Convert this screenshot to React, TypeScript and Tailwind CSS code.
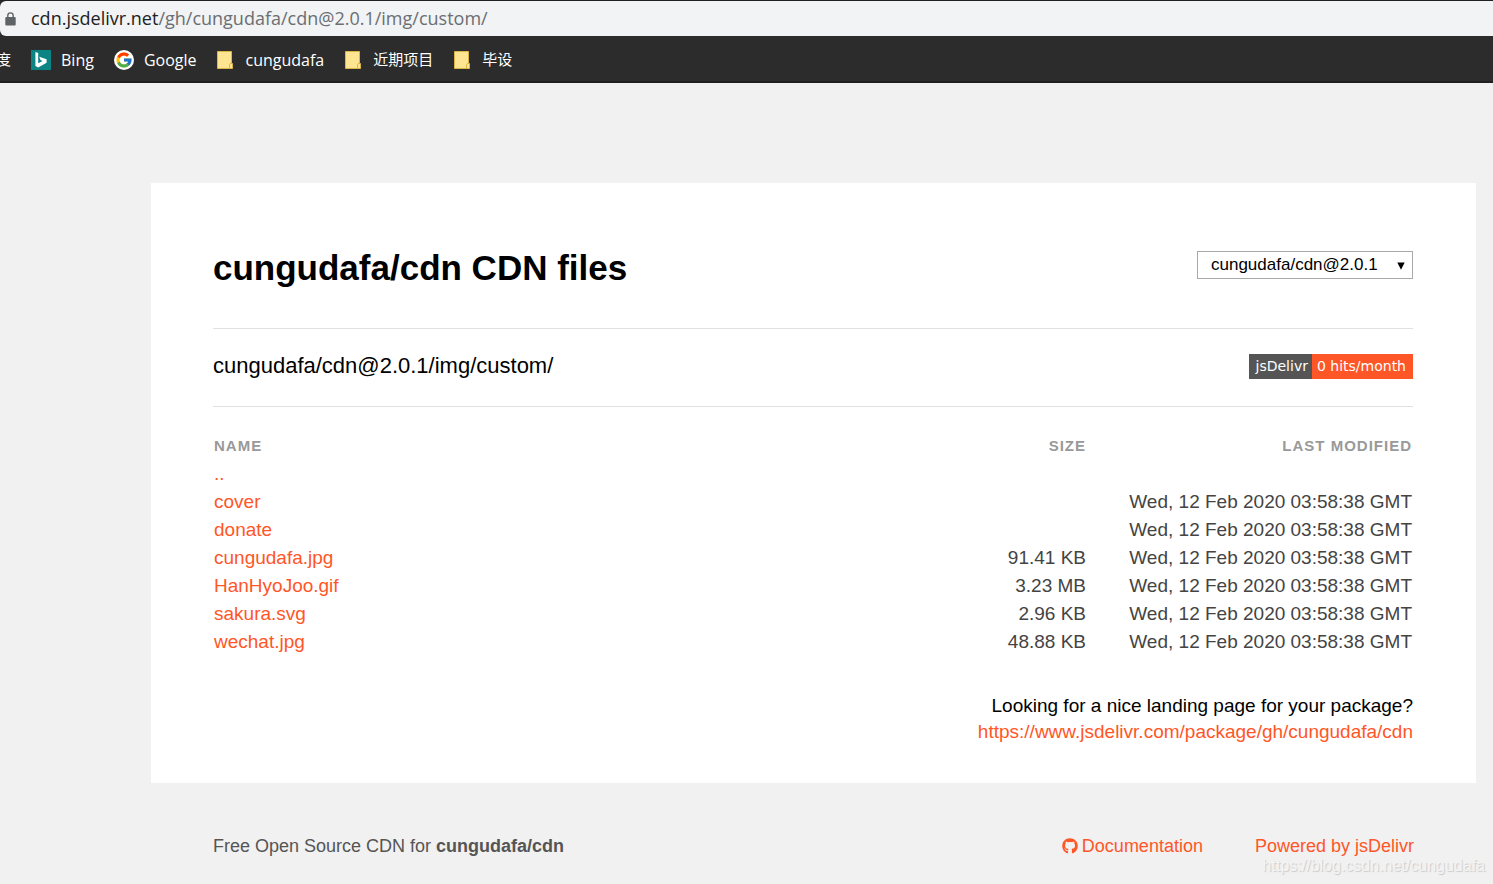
import { FaGithub } from "react-icons/fa";
import { FcGoogle } from "react-icons/fc";

const files = [
  { name: "..", size: "", modified: "" },
  { name: "cover", size: "", modified: "Wed, 12 Feb 2020 03:58:38 GMT" },
  { name: "donate", size: "", modified: "Wed, 12 Feb 2020 03:58:38 GMT" },
  { name: "cungudafa.jpg", size: "91.41 KB", modified: "Wed, 12 Feb 2020 03:58:38 GMT" },
  { name: "HanHyoJoo.gif", size: "3.23 MB", modified: "Wed, 12 Feb 2020 03:58:38 GMT" },
  { name: "sakura.svg", size: "2.96 KB", modified: "Wed, 12 Feb 2020 03:58:38 GMT" },
  { name: "wechat.jpg", size: "48.88 KB", modified: "Wed, 12 Feb 2020 03:58:38 GMT" },
];

function LockIcon() {
  return (
    <svg viewBox="0 0 11 14" className="h-3.5 w-[11px] shrink-0" aria-hidden="true">
      <path d="M2.8 6V3.6a2.7 2.7 0 0 1 5.4 0V6" fill="none" stroke="#5f6368" strokeWidth="1.4" />
      <rect x="0.3" y="5" width="10.4" height="8.5" rx="1" fill="#5f6368" />
    </svg>
  );
}

function BingIcon() {
  return (
    <svg viewBox="0 0 20 20" className="size-5 shrink-0" aria-hidden="true">
      <rect width="20" height="20" fill="#0c8484" />
      <path d="M4.4 2 7.2 3V13.2L11.6 10.9 9.5 9.9 8.2 6.8 15.6 9.3V12.7L7.2 17.6 4.4 16Z" fill="#fff" />
    </svg>
  );
}

function GoogleIcon() {
  return (
    <span className="flex size-5 shrink-0 items-center justify-center rounded-full bg-white">
      <FcGoogle className="size-[18px]" aria-hidden="true" />
    </span>
  );
}

function FolderIcon() {
  return (
    <svg viewBox="0 0 16 18" className="h-[18px] w-4 shrink-0" aria-hidden="true">
      <path d="M0.5 0.5H14.5V12.5H15.5V17.5H0.5Z" fill="#ffe591" stroke="#dcb546" />
      <path d="M12.5 17V13.5Q12.5 12.5 14.5 12.5" fill="none" stroke="#dcb546" />
    </svg>
  );
}

function BrowserBar() {
  return (
    <header className="font-['Open_Sans','Noto_Sans_CJK_SC',sans-serif]">
      <div className="border-t border-[#202124] bg-[#2c2c2c]">
        <div className="flex h-[35px] items-center gap-[15px] rounded-l-md bg-[#f1f3f4] pl-[5px] text-lg">
          <LockIcon />
          <div className="pb-0.5 text-[#6b6e72]">
            <span className="text-[#202124]">cdn.jsdelivr.net</span>/gh/cungudafa/cdn@2.0.1/img/custom/
          </div>
        </div>
      </div>
      <nav className="flex h-[47px] items-center overflow-hidden border-b-2 border-[#1f1f1f] bg-[#2c2c2c] pt-0.5 text-base whitespace-nowrap text-white">
        <a href="#baidu" className="flex w-[11px] shrink-0 justify-end text-[15px]">度</a>
        <a href="#bing" className="ml-5 flex items-center gap-2.5"><BingIcon />Bing</a>
        <a href="#google" className="ml-5 flex items-center gap-2.5"><GoogleIcon />Google</a>
        <a href="#cungudafa" className="ml-[21px] flex items-center gap-3"><FolderIcon />cungudafa</a>
        <a href="#recent" className="ml-[21px] flex items-center gap-3 text-[15px]"><FolderIcon />近期项目</a>
        <a href="#graduation" className="ml-[21px] flex items-center gap-3 text-[15px]"><FolderIcon />毕设</a>
      </nav>
    </header>
  );
}

export default function App() {
  return (
    <div className="relative min-h-screen bg-[#f1f1f1] font-['Liberation_Sans',Arial,sans-serif] text-lg text-black">
      <BrowserBar />
      <div className="pt-[100px] pr-[17px] pl-[151px]">
        <main className="bg-white pt-[60px] pr-[63px] pb-[38px] pl-[62px]">
          <div className="flex h-[86px] items-start justify-between border-b border-[#e1e1e1]">
            <h1 className="pt-1 text-[35px] leading-[42px] font-bold">cungudafa/cdn CDN files</h1>
            <div className="relative mt-2">
              <select aria-label="Version" className="block h-7 w-[216px] appearance-none border border-[#a9a9a9] bg-white pl-[13px] text-[17px] leading-6">
                <option>cungudafa/cdn@2.0.1</option>
              </select>
              <svg viewBox="0 0 8 8" className="pointer-events-none absolute top-[11px] right-2 size-2" aria-hidden="true">
                <path d="M0.3 0.5H7.7L4 7.8Z" fill="#000" />
              </svg>
            </div>
          </div>
          <div className="flex h-[78px] items-center justify-between border-b border-[#e1e1e1] pb-0.5">
            <h2 className="pb-0.5 text-[22px] leading-7">cungudafa/cdn@2.0.1/img/custom/</h2>
            <a href="#stats" className="flex h-[25px] items-center font-['DejaVu_Sans',sans-serif] text-sm leading-[25px] text-white">
              <span className="h-full bg-[#555] pr-1 pl-[7px] leading-[25px]">jsDelivr</span>
              <span className="h-full bg-[#ff5627] pr-[7px] pl-[5px] leading-[25px]">0 hits/month</span>
            </a>
          </div>
          <table className="mt-[25px] w-full border-collapse text-[19px] text-[#444]">
            <thead>
              <tr className="h-7 text-[15px] tracking-[1px] text-[#999] uppercase">
                <th className="pl-px text-left font-bold">Name</th>
                <th className="w-[200px] text-right font-bold">Size</th>
                <th className="w-[327px] pr-px text-right font-bold">Last modified</th>
              </tr>
            </thead>
            <tbody>
              {files.map((file) => (
                <tr key={file.name} className="h-7 leading-7">
                  <td className="pl-px"><a href={"#" + file.name} className="text-[#ff5627]">{file.name}</a></td>
                  <td className="text-right">{file.size}</td>
                  <td className="pr-px text-right">{file.modified}</td>
                </tr>
              ))}
            </tbody>
          </table>
          <div className="mt-[37px] text-right text-[19px] leading-[26px]">
            <p>Looking for a nice landing page for your package?</p>
            <a href="#package" className="text-[#ff5627]">https://www.jsdelivr.com/package/gh/cungudafa/cdn</a>
          </div>
        </main>
        <footer className="flex items-center justify-between px-[62px] pt-[50px] leading-[26px] text-[#555]">
          <p>Free Open Source CDN for <strong>cungudafa/cdn</strong></p>
          <div className="flex gap-[52px] text-[#ff5627]">
            <a href="#docs" className="flex items-center gap-1"><FaGithub className="size-4" aria-hidden="true" />Documentation</a>
            <a href="#jsdelivr">Powered by jsDelivr</a>
          </div>
        </footer>
      </div>
      <div className="absolute right-2 bottom-2 text-base leading-5 text-[#f4f4f4] [text-shadow:1px_1px_1px_#c8c8c8]">https://blog.csdn.net/cungudafa</div>
    </div>
  );
}
